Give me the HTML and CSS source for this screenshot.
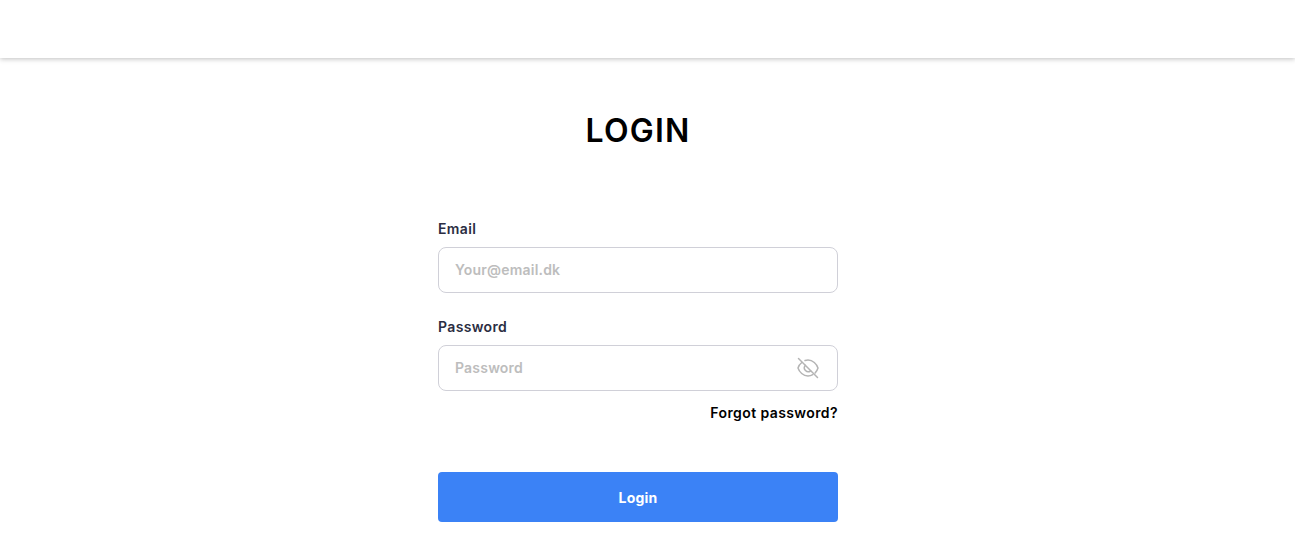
FILE: index.html
```html
<!DOCTYPE html>
<html lang="en">
<head>
<meta charset="UTF-8" />
<meta name="viewport" content="width=device-width, initial-scale=1" />
<title>Login</title>
<link rel="stylesheet" href="styles.css">
</head>
<body>
<header class="topbar"></header>

<div class="page">
  <main class="login">
    <h1>LOGIN</h1>

    <form class="login-form">
      <label class="field-label" for="email">Email</label>
      <div class="field">
        <input id="email" type="text" placeholder="Your@email.dk" />
      </div>

      <label class="field-label" for="password">Password</label>
      <div class="field">
        <input id="password" type="password" placeholder="Password" />
        <svg class="eye" width="22" height="22" viewBox="0 0 22 22" fill="none" stroke="#b4b4b4" stroke-width="1.5" stroke-linecap="round" stroke-linejoin="round">
          <path d="M1.500 1.500 20.500 20.500" />
          <path d="M4.800 5.500C2.800 7 1.500 9.200 1 11c1.300 4 5.200 8 10 8 1.800 0 3.400-.5 4.800-1.300" />
          <path d="M8 3.500C9 3.200 10 3 11 3c4.800 0 8.700 4 10 8-.5 1.700-1.500 3.400-2.900 4.900" />
          <path d="M8.300 8.400A3.800 3.800 0 0 0 13.600 13.800" />
        </svg>
      </div>

      <div class="forgot"><a href="#">Forgot password?</a></div>

      <button type="button" class="btn-login">Login</button>
    </form>
  </main>
</div>
</body>
</html>
```

FILE: styles.css
```css
body {
  font-family: Inter, 'Noto Sans', sans-serif;
  background: #fff;
  margin: 0;
}
.topbar {
  height: 58px;
  background: #fff;
  box-shadow: 0 1px 5px rgba(0,0,0,0.25);
}
.page {
  display: flex;
  justify-content: center;
  padding-right: 19px;
}
.login {
  width: 400px;
}
h1 {
  margin: 53px 0 0 0;
  text-align: center;
  font-size: 32px;
  line-height: 40px;
  font-weight: 600;
  letter-spacing: 1.2px;
  color: #000;
}
.login-form {
  margin-top: 69px;
}
.field-label {
  display: block;
  height: 18px;
  line-height: 18px;
  font-size: 14px;
  font-weight: 600;
  letter-spacing: 0.35px;
  color: #2b2d42;
}
.field {
  display: flex;
  align-items: center;
  height: 46px;
  margin: 9px 0 25px 0;
  padding: 0 18px 0 16px;
  box-sizing: border-box;
  border: 1px solid #d0d0d8;
  border-radius: 8px;
}
.field input {
  flex: 1;
  min-width: 0;
  height: 100%;
  border: none;
  outline: none;
  padding: 0 0 1px 0;
  box-sizing: border-box;
  font-family: inherit;
  font-size: 14px;
  font-weight: 600;
  letter-spacing: 0.2px;
  color: #2b2d42;
}
.field input::placeholder {
  color: #bdbdbd;
  opacity: 1;
}
.forgot {
  margin-top: -13px;
  text-align: right;
  line-height: 18px;
}
.forgot a {
  font-size: 14px;
  font-weight: 600;
  letter-spacing: 0.4px;
  color: #000;
  text-decoration: none;
}
.btn-login {
  display: block;
  width: 100%;
  height: 50px;
  margin-top: 50px;
  border: none;
  border-radius: 4px;
  background-color: #3b82f6;
  color: #fff;
  font-family: inherit;
  font-size: 14px;
  font-weight: 700;
  letter-spacing: 0.2px;
  cursor: pointer;
}
```
